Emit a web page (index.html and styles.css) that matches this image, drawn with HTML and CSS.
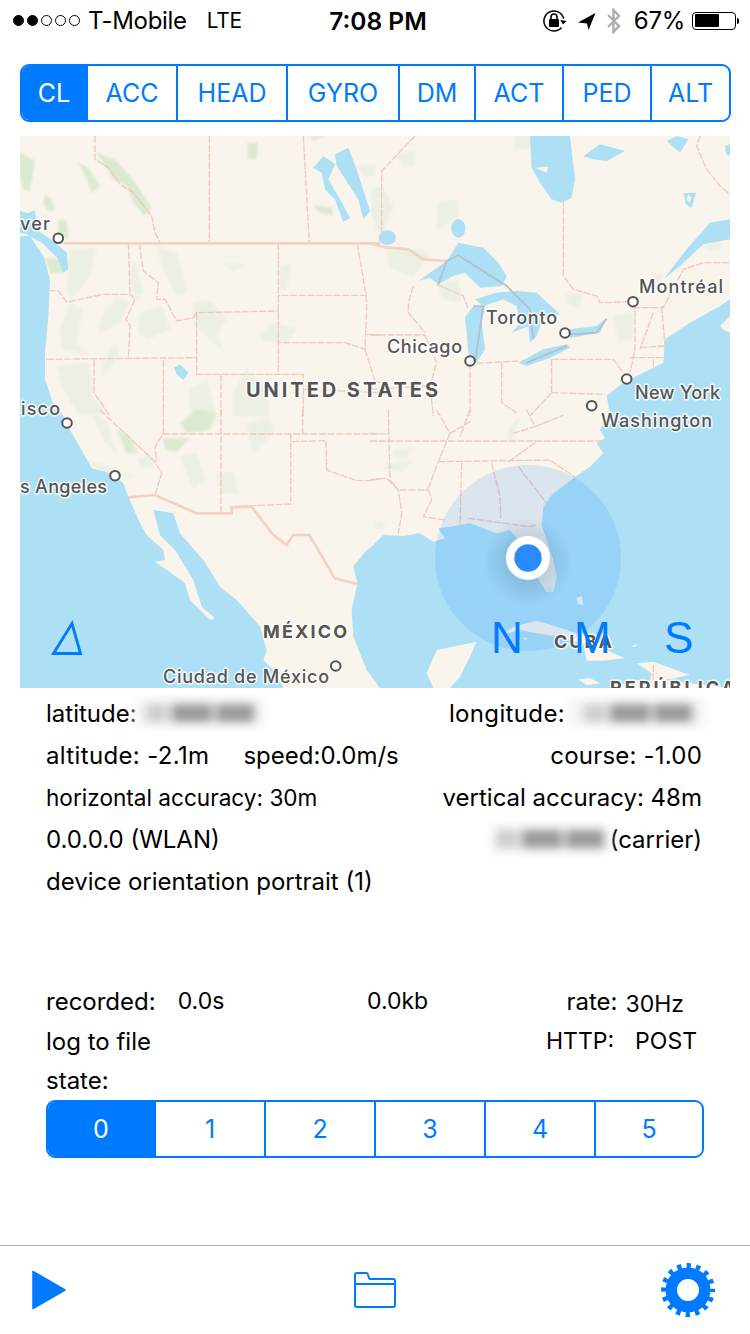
FILE: index.html
```
<!DOCTYPE html>
<html lang="en">
<head>
<meta charset="utf-8">
<title>Sensor log</title>
<link rel="stylesheet" href="styles.css">
</head>
<body>
<div class="screen">
  <header class="status">
    <div class="status-left">
      <span class="dots"><i class="on"></i><i class="on"></i><i></i><i></i><i></i></span>
      <span class="carrier">T-Mobile</span>
      <span class="net">LTE</span>
    </div>
    <div class="clock">7:08 PM</div>
    <div class="status-right">
      <svg class="ic-lock" viewBox="0 0 26 26" width="26" height="26">
        <path d="M20.5 19.5A10 10 0 1 1 22.6 10.5" fill="none" stroke="#000" stroke-width="1.5"/>
        <path d="M19 12.5h6.5l-3.2 4z" fill="#000" transform="rotate(8 22 14)"/>
        <rect x="8" y="11" width="10" height="8" rx="1" fill="#000"/>
        <path d="M10 11V9a3 3 0 0 1 6 0v2" fill="none" stroke="#000" stroke-width="1.6"/>
      </svg>
      <svg class="ic-loc" viewBox="0 0 18 18" width="18" height="18">
        <path d="M0 10.5L17.5 1 10.500 18 9 11.500z" fill="#000"/>
      </svg>
      <svg class="ic-bt" viewBox="0 0 16 26" width="16" height="26">
        <path d="M2 7l11 11-5.500 6V2L13 8 2 19" fill="none" stroke="#adadad" stroke-width="2.400"/>
      </svg>
      <span class="pct">67%</span>
      <span class="battery"><span class="battery-level"></span></span>
      <span class="battery-tip"></span>
    </div>
  </header>

  <nav class="seg seg-top">
    <span class="seg-item active w64">CL</span>
    <span class="seg-item w90">ACC</span>
    <span class="seg-item w110">HEAD</span>
    <span class="seg-item w112">GYRO</span>
    <span class="seg-item w76">DM</span>
    <span class="seg-item w88">ACT</span>
    <span class="seg-item w88">PED</span>
    <span class="seg-item grow">ALT</span>
  </nav>

  <section class="map">
    <svg class="map-svg" viewBox="0 0 710 552" width="710" height="552">
      <defs>
        <radialGradient id="dotshadow">
          <stop offset="0.5" stop-color="#3a5a78" stop-opacity=".16"/>
          <stop offset="1" stop-color="#3a5a78" stop-opacity="0"/>
        </radialGradient>
      </defs>
      <rect width="710" height="552" fill="#f9f4ec"/>

      <!-- vegetation -->
      <g class="green" transform="scale(.33333)">
        <path d="M0 50L45 75 30 165 10 160 0 120z"/>
        <path d="M75 175L95 190 105 220 85 225 70 205z"/>
        <path d="M115 250L140 255 145 310 115 295z"/>
        <path d="M175 80L205 95 240 150 215 170 200 130z"/>
        <path d="M230 50L290 75 335 125 395 215 375 240 340 200 320 150 280 130z"/>
        <path d="M683 20H712V68H683z"/>
        <path d="M880 208L935 215 938 240 895 228z"/>
        <path d="M75 365L125 370 130 410 90 410z"/>
        <path d="M870 0L915 0 880 15z"/>
        <path d="M1060 160L1080 155 1080 260 1060 250z"/>
      </g>
      <g class="green pale" transform="scale(.33333)">
        <path d="M150 340L230 335 210 420 170 470 155 500 140 460z"/>
        <path d="M410 330L470 350 500 470 470 480 430 400z"/>
        <path d="M340 370L370 470 345 490 330 420z"/>
        <path d="M290 485L330 500 300 560 235 590 250 530z"/>
        <path d="M360 530L425 510 450 580 385 610 355 590z"/>
        <path d="M150 500L185 520 170 620 215 660 125 640 120 580z"/>
        <path d="M520 500L570 495 620 545 590 600 615 650 550 590 520 570z"/>
        <path d="M605 380L680 385 640 405z"/>
        <path d="M780 390L815 385 800 460 780 460z"/>
        <path d="M720 590L760 560 830 580 800 620 730 615z"/>
        <path d="M110 690L205 680 220 790 260 830 180 840 130 760z"/>
        <path d="M250 680L285 620 300 660 250 720z"/>
        <path d="M640 770L680 700 740 760 750 840 640 840z"/>
        <path d="M510 760L560 730 590 840 510 840z"/>
        <path d="M1010 90L1065 85 1065 120 1030 120z"/>
      </g>
      <g class="green" transform="translate(0 274) scale(.33333)">
        <path d="M480 40L530 0 590 10 570 60 500 70z"/>
        <path d="M430 85L510 85 470 125 435 120z"/>
        <path d="M290 60L330 80 355 130 320 130z"/>
      </g>
      <g class="green pale" transform="translate(0 274) scale(.33333)">
        <path d="M210 0L265 40 290 130 250 90z"/>
        <path d="M480 140L530 130 555 210 520 235z"/>
        <path d="M590 190L640 185 655 250 600 250z"/>
        <path d="M680 40L750 20 760 70 700 130z"/>
        <path d="M205 150L260 170 340 200 240 190z"/>
        <path d="M355 145L395 135 400 170 360 170z"/>
      </g>
      <g class="green pale" transform="translate(350 0) scale(.33333)">
        <path d="M80 55L135 45 135 90 100 95z"/>
        <path d="M0 155L40 160 70 210 40 290 15 280z"/>
        <path d="M205 200L260 190 265 240 200 285z"/>
        <path d="M50 345L135 340 185 350 130 420 60 395z"/>
        <path d="M205 445L265 430 275 500 215 490z"/>
        <path d="M435 0L480 0 480 40 435 40z"/>
        <path d="M590 470L640 475 625 515 595 505z"/>
        <path d="M730 540L790 530 790 610 745 615z"/>
        <path d="M1005 325L1055 315 1055 335 1010 345z"/>
        <path d="M850 410L875 415 870 440 850 435z"/>
      </g>
      <g class="green pale" transform="translate(350 274) scale(.33333)">
        <path d="M70 120L130 115 110 145 70 140z"/>
        <path d="M45 160L125 155 95 185 50 180z"/>
        <path d="M10 335L45 335 35 355 15 350z"/>
        <path d="M420 50L450 20 430 90 410 100z"/>
      </g>

      <!-- water -->
      <g class="water">
        <path transform="scale(.33333)" d="M0 300L30 300 70 360 90 430 85 540 75 650 75 730 95 790 110 840H0z"/>
        <path transform="scale(.33333)" d="M0 225L25 232 45 222 55 285 100 315 140 350 145 400 130 410 112 365 65 320 20 295 0 290z"/>
        <path transform="translate(0 274) scale(.33333)" d="M0 0L120 0 150 60 190 130 215 175 270 190 310 220 325 260 360 340 380 375 430 420 435 450 405 455 440 480 495 520 510 570 570 630 585 625 545 590 520 510 465 420 420 375 400 300 460 310 480 370 550 450 600 530 650 570 720 650 740 720 730 750 770 790 790 834H0z"/>
        <path transform="translate(350 274) scale(.33333)" d="M-38 520L-50 470-10 420 0 415 40 375 100 378 150 370 190 395 225 385 205 355 240 350 300 340 380 370 420 360 450 395 500 500 530 545 550 545 560 500 550 450 515 345 520 290 545 255 610 205 660 170 700 130 680 100 705 85 690 60 720 8 710-42 760-82 820-112 880-142 885-212 960-262 1050-312 1080-332V834H30L-10 780-50 680-55 600z"/>
        <path transform="scale(.33333)" d="M945 55L985 35 1010 100 1050 225 1030 250 1015 190 950 90z"/>
        <path transform="scale(.33333)" d="M880 95L910 60 945 85 925 130 960 190 990 245 970 258 945 190 915 160 905 110z"/>
        <path transform="scale(.33333)" d="M462 695L480 685 505 710 490 732 470 715z"/>
        <g transform="translate(350 0) scale(.33333)">
          <path d="M480 0H600L615 130 605 185 575 200 545 190 510 140 485 95z"/>
          <path d="M640 60L690 25 765 45 710 75 670 70z"/>
          <path d="M890 15L920 0 955 10 930 50z"/>
          <path d="M145 435L230 375 265 320 340 335 385 380 410 420 395 450 330 455 285 410 250 420 205 445 180 425z"/>
          <path d="M285 545L310 510 345 510 335 560 345 640 320 680 295 650 290 590z"/>
          <path d="M315 490L380 470 440 465 500 470 570 535 520 545 500 600 480 620 475 570 425 590 450 560 440 510 400 490 340 510z"/>
          <path d="M445 680L520 640 590 625 600 635 540 665 470 690z"/>
          <path d="M600 580L680 570 710 545 690 590 600 605z"/>
          <path d="M880 430L950 340 1020 260 1080 250V310L1000 325 930 390z"/>
          <ellipse cx="265" cy="277" rx="21" ry="28"/>
          <ellipse cx="52" cy="305" rx="26" ry="22"/>
          <path d="M940 172L978 170 965 215 948 205z"/>
          <path d="M1065 30L1080 25V60L1068 55z"/>
        </g>
      </g>
      <g class="land-patch" transform="translate(350 0) scale(.33333)">
        <path d="M495 95L535 92 530 110z"/>
        <path d="M1050 570L1080 540V590L1065 585z"/>
        <path d="M955 175L965 185 958 200 950 190z"/>
      </g>
      <g class="land-patch" transform="translate(350 274) scale(.33333)">
        <path d="M200 720L320 695 300 740 270 800 240 834H190L170 790z"/>
        <path d="M400 672L430 650 500 632 560 650 620 670 680 690 720 725 765 745 700 752 650 752 640 700 570 680 500 670 450 660z"/>
        <path d="M800 760L850 755 960 795 885 810 860 834H835L845 790z"/>
        <path d="M625 808L660 805 692 820 650 826z"/>
        <path d="M620 565L635 558 640 585 625 582z"/>
        <path d="M720 834L800 810 900 812 1080 834z"/>
        <path d="M460 680L472 685 465 692z"/>
        <path d="M785 708L805 703 795 712z"/>
      </g>
      <g class="green" transform="translate(350 274) scale(.33333)">
        <path d="M528 532L550 530 545 548 535 546z"/>
      </g>

      <!-- borders -->
      <g class="borders" transform="scale(.33333)">
        <path d="M225 0V70L265 95 300 145 340 170 395 240 405 290 420 320"/>
        <path d="M568 0V320"/>
        <path d="M850 0L868 320"/>
        <path d="M325 322L330 470"/>
        <path d="M358 322L370 405 415 440 410 490H435L470 555 520 545 530 530 775 525"/>
        <path d="M775 322V715"/>
        <path d="M1012 322L1038 478H775"/>
        <path d="M1038 478L1040 520 1035 640 975 620H775"/>
        <path d="M85 463L115 465 140 498 250 475H330L345 490 318 550 330 570 325 668"/>
        <path d="M80 670L530 665"/>
        <path d="M530 530V715H850V840"/>
        <path d="M222 672V770L270 840"/>
        <path d="M430 672V840"/>
        <path d="M603 715V840"/>
        <path d="M1035 640L1065 735 1080 740"/>
        <path d="M1040 595L1080 597"/>
        <path d="M850 760L1080 770"/>
      </g>
      <path class="border-intl" transform="scale(.33333)" d="M130 322H1080"/>
      <g class="borders" transform="translate(0 274) scale(.33333)">
        <path d="M240 0L405 155 425 190 405 255"/>
        <path d="M430 0V72L405 110 410 155"/>
        <path d="M428 72H1080"/>
        <path d="M603 0V310"/>
        <path d="M848 0V72"/>
        <path d="M812 72V282L635 290"/>
        <path d="M815 95L918 92 920 180 1010 212H1050L1080 205"/>
      </g>
      <path class="border-intl" transform="translate(0 274) scale(.33333)" d="M325 262L405 255 530 310H635V292L695 290 760 375 800 405 820 375H868L945 505 1012 522"/>
      <g class="borders" transform="translate(350 0) scale(.33333)">
        <path d="M135 0L35 105V320"/>
        <path d="M580 190V420L610 460 680 480 690 500 790 497"/>
        <path d="M790 515H880L940 400 1000 380H1080"/>
        <path d="M795 520V640L780 710"/>
        <path d="M130 450L115 500V530L165 590"/>
        <path d="M200 445L280 480 295 520"/>
        <path d="M0 597H165L200 680 180 750 190 840"/>
        <path d="M300 680V840"/>
        <path d="M395 680V800L440 830"/>
        <path d="M320 682L445 675"/>
        <path d="M545 670V770"/>
        <path d="M545 670H730L760 710"/>
        <path d="M545 770L700 775"/>
        <path d="M850 530L810 640"/>
        <path d="M875 510L885 630"/>
        <path d="M810 635L885 630"/>
        <path d="M780 665H880"/>
        <path d="M850 670V700"/>
        <path d="M990 0L980 30 1010 100 1050 150 1080 175"/>
        <path d="M0 760L180 750"/>
        <path d="M545 770L480 840"/>
      </g>
      <path class="border-intl" transform="translate(350 0) scale(.33333)" d="M0 322L50 335 115 340 160 370 230 375"/>
      <g class="border-lake" transform="translate(350 0) scale(.33333)">
        <path d="M230 375L265 358 410 450 480 520 490 610"/>
        <path d="M230 375L205 445"/>
        <path d="M310 510L340 510 315 680"/>
        <path d="M470 680L590 630"/>
        <path d="M600 595L680 590 710 548"/>
      </g>
      <g class="borders" transform="translate(350 274) scale(.33333)">
        <path d="M55 0L60 210 85 240 95 310 85 370"/>
        <path d="M0 70L55 72"/>
        <path d="M0 93H700"/>
        <path d="M240 70L205 155 175 235 185 270 160 320 225 330"/>
        <path d="M200 0L240 70 300 35"/>
        <path d="M300 0L270 80"/>
        <path d="M470 0L495 50 430 70"/>
        <path d="M495 50L580 15"/>
        <path d="M205 155L540 150 620 205"/>
        <path d="M275 160L270 350"/>
        <path d="M365 160L390 260 392 325"/>
        <path d="M445 170L530 280"/>
        <path d="M295 325L480 350 500 345"/>
        <path d="M0 210L50 205 85 240H175"/>
        <path d="M415 155L500 95"/>
        <path d="M850 765V810"/>
      </g>

      <!-- accuracy -->
      <circle class="accuracy" cx="508" cy="422" r="93"/>
      <circle cx="508" cy="425" r="44" fill="url(#dotshadow)"/>
      <circle cx="508" cy="422" r="22" fill="#fff"/>
      <circle cx="508" cy="422" r="13.700" fill="#2a8bff"/>

      <!-- places -->
      <g class="pins">
        <circle cx="38.300" cy="102.300" r="4.800"/>
        <circle cx="47" cy="287" r="4.800"/>
        <circle cx="95" cy="339.700" r="4.800"/>
        <circle cx="450" cy="225" r="4.800"/>
        <circle cx="545" cy="197" r="4.800"/>
        <circle cx="613" cy="165.700" r="4.800"/>
        <circle cx="606.700" cy="243" r="4.800"/>
        <circle cx="571.700" cy="269.700" r="4.800"/>
        <circle cx="315.700" cy="530" r="4.800"/>
      </g>
      <g class="places">
        <text x="0" y="94" textLength="30">ver</text>
        <text x="1" y="279" textLength="39">isco</text>
        <text x="367" y="217" textLength="75">Chicago</text>
        <text x="466" y="188" textLength="71">Toronto</text>
        <text x="619" y="157" textLength="84">Montréal</text>
        <text x="615" y="263" textLength="85">New York</text>
        <text x="581" y="291" textLength="111">Washington</text>
        <text x="0" y="357" textLength="87">s Angeles</text>
        <text x="143" y="547" textLength="166">Ciudad de México</text>
        <text class="region" x="226" y="261" textLength="192">UNITED STATES</text>
        <text class="region small" x="243" y="502" textLength="84">MÉXICO</text>
        <text class="region small" x="534" y="512" textLength="58">CUBA</text>
        <text class="region small" x="590" y="558" textLength="125">REPÚBLICA</text>
      </g>
    </svg>
    <svg class="compass" viewBox="0 0 34 36" width="34" height="36">
      <path d="M2.500 33.500L21 3.500 29.500 33.500z" fill="none" stroke="#007aff" stroke-width="2.800"/>
    </svg>
    <span class="axis axis-n">N</span>
    <span class="axis axis-m">M</span>
    <span class="axis axis-s">S</span>
  </section>

  <section class="info">
    <div class="row">
      <div class="cell"><span>latitude:</span><span class="masked m-lat"><i></i><i></i><i></i></span></div>
      <div class="cell"><span class="wide">longitude:</span><span class="masked m-lon"><i></i><i></i><i></i></span></div>
    </div>
    <div class="row">
      <div class="cell"><span class="wide">altitude: -2.1m</span><span class="speed">speed:0.0m/s</span></div>
      <div class="cell"><span class="wide-s">course: -1.00</span></div>
    </div>
    <div class="row">
      <div class="cell"><span class="fit">horizontal accuracy: 30m</span></div>
      <div class="cell"><span>vertical accuracy: 48m</span></div>
    </div>
    <div class="row">
      <div class="cell"><span>0.0.0.0 (WLAN)</span></div>
      <div class="cell"><span class="masked m-ip"><i></i><i></i><i></i></span><span>(carrier)</span></div>
    </div>
    <div class="row">
      <div class="cell"><span>device orientation portrait (1)</span></div>
    </div>
  </section>

  <section class="log">
    <div class="log-row rec">
      <div class="cell"><span class="rec-label">recorded:</span><span class="val">0.0s</span></div>
      <div class="cell"><span class="val">0.0kb</span></div>
      <div class="cell"><span>rate:</span><span class="rate val">30Hz</span></div>
    </div>
    <div class="log-row file">
      <span>log to file</span>
      <div class="cell"><span class="val">HTTP:</span><span class="post val">POST</span></div>
    </div>
    <div class="state-label">state:</div>
    <nav class="seg seg-state">
      <span class="seg-item active w106">0</span>
      <span class="seg-item w110">1</span>
      <span class="seg-item w110">2</span>
      <span class="seg-item w110">3</span>
      <span class="seg-item w110">4</span>
      <span class="seg-item grow">5</span>
    </nav>
  </section>

  <footer class="tabbar">
    <svg viewBox="0 0 34 40" width="34" height="40">
      <path d="M1 1.500L33 20 1 38.500z" fill="#007aff" stroke="#007aff" stroke-width="1.500" stroke-linejoin="round"/>
    </svg>
    <svg class="folder" viewBox="0 0 44 37" width="44" height="37">
      <path d="M2 34V4a2 2 0 0 1 2-2h9a2 2 0 0 1 2 1.500l1 3.500a2 2 0 0 0 2 1h22a2 2 0 0 1 2 2v24a2 2 0 0 1-2 2H4a2 2 0 0 1-2-2z" fill="none" stroke="#007aff" stroke-width="2"/>
      <path d="M2 13H42" fill="none" stroke="#007aff" stroke-width="2"/>
    </svg>
    <svg class="gear" viewBox="0 0 56 56" width="56" height="56">
      <circle cx="28" cy="28" r="22.500" fill="#007aff"/>
      <circle cx="28" cy="28" r="24.500" fill="none" stroke="#007aff" stroke-width="5" stroke-dasharray="4.400 5.221" stroke-dashoffset="2.200"/>
      <circle cx="28" cy="28" r="11" fill="#fff"/>
    </svg>
  </footer>
</div>
</body>
</html>
```
FILE: styles.css
```
* { box-sizing: border-box; }
html, body { margin: 0; padding: 0; background: #fff; }
body { font-family: Inter, Roboto, "Liberation Sans", sans-serif; color: #000; }
.screen { width: 750px; height: 1334px; overflow: hidden; display: flex; flex-direction: column; }

/* status bar */
.status { height: 40px; padding: 1px 11px 0 13px; display: grid; grid-template-columns: 1fr auto 1fr; align-items: center; font-size: 24px; letter-spacing: -.3px; flex: none; }
.status-left { display: flex; align-items: center; }
.dots { display: flex; gap: 3px; margin-right: 8px; }
.dots i { width: 11px; height: 11px; border-radius: 50%; border: 1px solid #000; }
.dots i.on { background: #000; }
.net { margin-left: 20px; font-size: 21px; }
.clock { font-weight: 600; margin-left: 4px; font-size: 24.500px; letter-spacing: 0; }
.status-right { display: flex; align-items: center; justify-content: flex-end; }
.ic-lock { margin-right: 11px; }
.ic-loc { margin-right: 10px; }
.ic-bt { margin-right: 12px; }
.pct { margin-right: 7px; }
.battery { width: 44px; height: 18px; border: 1.500px solid #000; border-radius: 4px; padding: 1.500px; display: block; }
.battery-level { display: block; width: 63%; height: 100%; background: #000; border-radius: 1px; }
.battery-tip { width: 2px; height: 6px; background: #000; border-radius: 0 2px 2px 0; margin-left: 1px; }

/* segmented controls */
.seg { display: flex; border: 2px solid #007aff; border-radius: 9px; overflow: hidden; height: 58px; flex: none; color: #007aff; font-size: 25px; }
.seg-item { display: flex; align-items: center; justify-content: center; border-left: 2px solid #007aff; flex: none; }
.seg-item:first-child { border-left: 0; }
.seg-item.active { background: #007aff; color: #fff; }
.seg-item.grow { flex: 1 1 0; }
.seg-top { margin: 24px 19px 0 20px; }
.w64 { width: 64px; }
.w90 { width: 90px; }
.w106 { width: 106px; }
.w110 { width: 110px; }
.w112 { width: 112px; }
.w76 { width: 76px; }
.w88 { width: 88px; }

/* map */
.map { position: relative; margin: 14px 20px 0; height: 552px; flex: none; overflow: hidden; }
.map-svg { display: block; }
.green { filter: blur(2.500px); }
.green path { fill: #dbe9d0; }
.green.pale path { fill: #ebf0e3; }
.water path, .water ellipse { fill: #addff5; }
.land-patch path { fill: #f9f4ec; }
.borders path { fill: none; stroke: #f1c9be; stroke-width: 4; stroke-dasharray: 22 4; }
.border-intl { fill: none; stroke: #f6cfc5; stroke-width: 8; }
.border-lake path { fill: none; stroke: #b4bdcb; stroke-width: 5; }
.accuracy { fill: #007aff; fill-opacity: .12; }
.pins circle { fill: #fff; stroke: #555; stroke-width: 2; }
.places text { font-family: Inter, Roboto, sans-serif; font-size: 18px; font-weight: 500; fill: #555; stroke: #fff; stroke-opacity: .85; stroke-width: 3px; paint-order: stroke; stroke-linejoin: round; }
.places text.region { font-size: 20px; font-weight: 700; }
.places text.small { font-size: 18px; }
.compass { position: absolute; left: 31px; top: 484px; }
.axis { position: absolute; top: 476px; color: #007aff; font-size: 44px; line-height: 52px; font-family: "Liberation Sans", sans-serif; }
.axis-n { left: 471px; }
.axis-m { left: 554px; }
.axis-s { left: 644px; }

/* info */
.info { margin-top: 4px; padding: 0 48px 0 46px; font-size: 24px; flex: none; }
.row { display: flex; justify-content: space-between; height: 42px; align-items: center; }
.cell { display: flex; align-items: center; }
.wide { letter-spacing: .35px; }
.wide-s { letter-spacing: .2px; }
.fit { font-size: 22.600px; }
.speed { margin-left: 34px; }
.masked { display: flex; gap: 4px; align-items: center; justify-content: center; height: 28px; background: #f4f4f4; filter: blur(5px); }
.masked i { display: block; height: 18px; background: #9a9a9a; }
.masked i:nth-child(1) { width: 22px; background: #cfcfcf; }
.masked i:nth-child(2) { width: 40px; }
.masked i:nth-child(3) { width: 38px; }
.m-lat { width: 130px; margin-left: -2px; }
.m-lon { width: 137px; margin-left: 4px; margin-right: -4px; }
.m-ip { width: 117px; margin-right: 1px; }

/* log */
.log { margin-top: 79px; padding: 0 46px; font-size: 24px; flex: none; }
.val { font-size: 23px; }
.log-row { display: grid; height: 40px; align-items: center; padding-right: 7px; }
.rec { grid-template-columns: 321px 1fr auto; padding-right: 20px; }
.file { grid-template-columns: 1fr auto; }
.rec-label { margin-right: 22px; }
.rate { margin-left: 8px; position: relative; top: 3px; }
.post { margin-left: 21px; }
.state-label { height: 38px; display: flex; align-items: center; }
.seg-state { margin-right: 0; margin-top: 1px; }

/* tab bar */
.tabbar { margin-top: auto; height: 89px; border-top: 1px solid #b2b2b2; display: flex; align-items: flex-start; justify-content: space-between; padding: 24px 34px 0 32px; flex: none; }
.folder { margin-top: 1px; margin-left: 24px; }
.gear { margin-top: -8px; }
```
